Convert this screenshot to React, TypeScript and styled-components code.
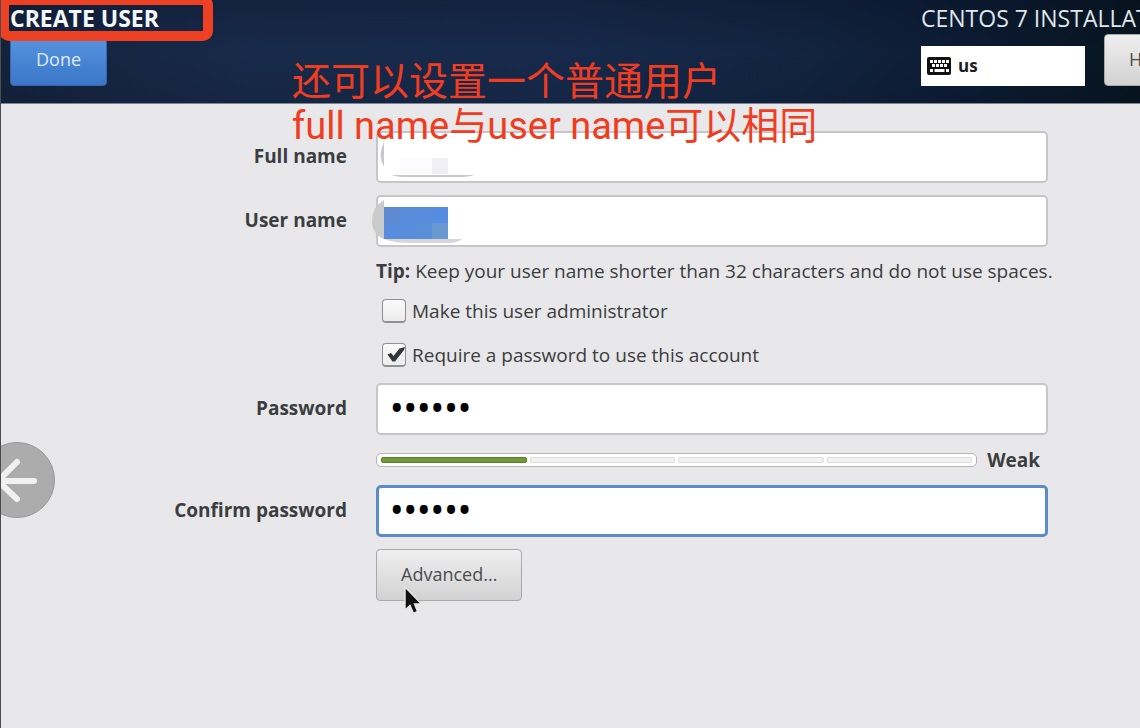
import React, { useState } from "react";
import styled, { createGlobalStyle, css } from "styled-components";

const GlobalStyle = createGlobalStyle`
  *, *::before, *::after { box-sizing: border-box; }
  html, body { margin: 0; background: #e8e8ea; }
  body, button, input { font-family: "Open Sans", "Noto Sans", sans-serif; }
`;

const Page = styled.div`
  position: relative;
  min-height: 100vh;
  overflow: hidden;
  border-left: 1px solid #4c4c50;
  background: #e8e8ea;
  color: #3b3d3f;
  font-size: 19px;
  line-height: 24px;
`;

const Header = styled.header`
  display: flex;
  justify-content: space-between;
  height: 104px;
  padding-left: 9px;
  border-bottom: 1px solid #7c8592;
  background:
    linear-gradient(180deg, rgba(4, 12, 28, 0.25), rgba(4, 12, 28, 0) 50%, rgba(4, 12, 28, 0.12)),
    linear-gradient(90deg, #14223d 0%, #182a4a 22%, #17294b 50%, #122440 70%, #0c1c33 84%, #07151f 100%);
`;

const HeaderSide = styled.div<{ $width?: number }>`
  display: flex;
  flex-direction: column;
  flex: none;
  width: ${(p) => (p.$width ? `${p.$width}px` : "auto")};
  padding-top: 4px;
  overflow: hidden;
`;

const Title = styled.h1<{ $light?: boolean }>`
  margin: 0;
  color: ${(p) => (p.$light ? "#dfe6ec" : "#f4f7fb")};
  font-size: 23px;
  font-weight: ${(p) => (p.$light ? 400 : 700)};
  line-height: 29px;
  white-space: nowrap;
`;

const HeaderTools = styled.div`
  display: flex;
  align-items: flex-end;
  gap: 19px;
  margin-top: 1px;
`;

const Button = styled.button<{ $primary?: boolean }>`
  flex: none;
  height: 52px;
  padding: 0 24px 2px;
  border: 1px solid #a9a9a9;
  border-radius: 4px;
  background: linear-gradient(#efefef, #d2d2d2);
  color: #4a4c4e;
  font-size: 18px;
  line-height: 24px;
  ${(p) =>
    p.$primary &&
    css`
      padding: 0 25px 2px;
      border-color: #3465ad;
      background: linear-gradient(#5795e0, #3b76c8);
      color: #dfeafa;
    `}
`;

const KeyboardLayout = styled.div`
  display: flex;
  align-items: center;
  gap: 7px;
  flex: none;
  width: 164px;
  height: 40px;
  padding-left: 6px;
  background: #fff;
  color: #1c1c1c;
  font-size: 17px;
  font-weight: 700;
`;

const Form = styled.form`
  display: grid;
  grid-template-columns: 346px minmax(0, 1fr);
  column-gap: 29px;
  row-gap: 12px;
  align-items: center;
  padding: 27px 92px 0 0;
`;

const Label = styled.label`
  grid-column: 1;
  padding-bottom: 2px;
  text-align: right;
  font-weight: 700;
`;

const Field = styled.div`
  position: relative;
  grid-column: 2;
  display: flex;
`;

const TextBox = styled.input<{ $active?: boolean }>`
  width: 100%;
  height: 52px;
  padding: 0 12px;
  border: ${(p) => (p.$active ? "3px solid #5c8bc8" : "2px solid #c6c6c8")};
  border-radius: 5px;
  background: #fff;
  color: #000;
  font-size: 19px;
  outline: none;
  &[type="password"] {
    padding: 0 ${(p) => (p.$active ? 11 : 12)}px 4px;
    font-family: "Noto Sans", sans-serif;
    font-size: 36px;
  }
`;

const Mosaic = styled.svg`
  position: absolute;
  left: -5px;
  top: 0;
  pointer-events: none;
`;

const Tip = styled.p`
  grid-column: 2;
  margin: 0;
  white-space: nowrap;
`;

const CheckRow = styled.label`
  grid-column: 2;
  display: flex;
  align-items: center;
  gap: 6px;
  height: 32px;
  padding-left: 6px;
`;

const CheckBox = styled.span`
  position: relative;
  display: flex;
  width: 24px;
  height: 24px;
  input {
    appearance: none;
    width: 24px;
    height: 24px;
    margin: 0;
    border: 1px solid #8f9092;
    border-bottom-width: 2px;
    border-radius: 4px;
    background: linear-gradient(#fafafa, #ececec);
  }
  svg {
    position: absolute;
    left: 0;
    top: 0;
    visibility: hidden;
    pointer-events: none;
  }
  input:checked + svg { visibility: visible; }
`;

const Strength = styled.div`
  grid-column: 2;
  display: flex;
  align-items: center;
  gap: 10px;
  height: 26px;
  padding-right: 8px;
  font-weight: 700;
`;

const Meter = styled.div`
  display: flex;
  flex: 1;
  gap: 3px;
  height: 14px;
  padding: 3px 4px;
  border: 1px solid #b4b4b6;
  border-radius: 5px;
  background: #fff;
`;

const Segment = styled.span<{ $filled: boolean }>`
  flex: 1;
  border: 1px solid ${(p) => (p.$filled ? "#5c7f2c" : "#dcdcdc")};
  border-radius: 2px;
  background: ${(p) => (p.$filled ? "#739a3a" : "#f2f2f2")};
`;

const Actions = styled.div`
  grid-column: 2;
  display: flex;
`;

const Highlight = styled.div`
  position: absolute;
  left: -2px;
  top: -5px;
  width: 214px;
  height: 46px;
  border: 10px solid #ee4023;
  border-radius: 10px;
  pointer-events: none;
`;

const Note = styled.div`
  position: absolute;
  left: 291px;
  top: 60px;
  color: #f03c20;
  font-family: Roboto, "Noto Sans CJK SC", sans-serif;
  line-height: 44px;
  white-space: nowrap;
  pointer-events: none;
`;

const NoteLine = styled.p<{ $size: number }>`
  margin: 0;
  font-size: ${(p) => p.$size}px;
`;

const BackButton = styled.button`
  position: absolute;
  left: -22px;
  top: 442px;
  width: 76px;
  height: 76px;
  padding: 0;
  border: 1px solid #979797;
  border-radius: 50%;
  background: #acacac;
  svg { display: block; }
`;

const Pointer = styled.svg`
  position: absolute;
  left: 402px;
  top: 586px;
  pointer-events: none;
`;

function KeyboardIcon() {
  const keys = [
    [3, 3], [7, 3], [11, 3], [15, 3], [19, 3],
    [5, 7], [9, 7], [13, 7], [17, 7],
    [3, 12], [19, 12],
  ];
  return (
    <svg width="24" height="18" viewBox="0 0 24 18" aria-hidden="true">
      <rect width="24" height="18" rx="2" fill="#111" />
      {keys.map(([x, y]) => (
        <rect key={`${x}-${y}`} x={x} y={y} width="3" height="3" fill="#fff" />
      ))}
      <rect x="7.5" y="12" width="10" height="3" fill="#fff" />
    </svg>
  );
}

function Check({ label, initial }: { label: string; initial: boolean }) {
  const [on, setOn] = useState(initial);
  return (
    <CheckRow>
      <CheckBox>
        <input type="checkbox" checked={on} onChange={() => setOn(!on)} />
        <svg width="24" height="24" viewBox="0 0 24 24" aria-hidden="true">
          <path d="M5.5 11.5 L9 10 L11.5 13 L17.5 5.5 L23 4 L22 7 L13 18.5 L10.5 18.5 Z" fill="#333537" />
        </svg>
      </CheckBox>
      {label}
    </CheckRow>
  );
}

export default function App() {
  const [password, setPassword] = useState("secret");
  const [confirm, setConfirm] = useState("secret");

  return (
    <Page>
      <GlobalStyle />
      <Header>
        <HeaderSide>
          <Title>CREATE USER</Title>
          <HeaderTools>
            <Button type="button" $primary>Done</Button>
          </HeaderTools>
        </HeaderSide>
        <HeaderSide $width={219}>
          <Title as="h2" $light>CENTOS 7 INSTALLATION</Title>
          <HeaderTools>
            <KeyboardLayout>
              <KeyboardIcon />
              us
            </KeyboardLayout>
            <Button type="button">Help!</Button>
          </HeaderTools>
        </HeaderSide>
      </Header>

      <Form onSubmit={(e) => e.preventDefault()}>
        <Label htmlFor="full-name">Full name</Label>
        <Field>
          <TextBox id="full-name" type="text" />
          <Mosaic width="110" height="52" viewBox="0 0 110 52" aria-hidden="true">
            <path d="M13 11 Q6 24 13 36 Z" fill="#c9c9cb" />
            <path d="M21 44 H103 Q98 46 88 46 H34 Q26 46 21 44 Z" fill="#c9c9cb" />
            <rect x="29" y="27" width="32" height="16" fill="#fcfcfe" />
            <rect x="61" y="27" width="16" height="16" fill="#efeff5" />
          </Mosaic>
        </Field>

        <Label htmlFor="user-name">User name</Label>
        <Field>
          <TextBox id="user-name" type="text" />
          <Mosaic width="110" height="52" viewBox="0 0 110 52" aria-hidden="true">
            <path d="M13 5 Q1 12 1 26 Q1 39 13 44 Z" fill="#cbcbcb" />
            <path d="M13 44 H91 Q87 48 76 48 H40 Q22 48 13 44 Z" fill="#d6d6d8" />
            <rect x="13" y="12" width="64" height="32" fill="#588cdc" />
            <rect x="13" y="12" width="16" height="17" fill="#5d8ad2" />
            <rect x="61" y="12" width="16" height="17" fill="#568be2" />
            <rect x="45" y="28" width="16" height="16" fill="#588fd8" />
            <rect x="61" y="28" width="16" height="16" fill="#6798d0" />
          </Mosaic>
        </Field>

        <Tip><b>Tip:</b> Keep your user name shorter than 32 characters and do not use spaces.</Tip>
        <Check label="Make this user administrator" initial={false} />
        <Check label="Require a password to use this account" initial />

        <Label htmlFor="password">Password</Label>
        <Field>
          <TextBox id="password" type="password" value={password} onChange={(e) => setPassword(e.target.value)} />
        </Field>

        <Strength>
          <Meter>
            {[0, 1, 2, 3].map((i) => <Segment key={i} $filled={i === 0} />)}
          </Meter>
          Weak
        </Strength>

        <Label htmlFor="confirm">Confirm password</Label>
        <Field>
          <TextBox id="confirm" type="password" $active value={confirm} onChange={(e) => setConfirm(e.target.value)} />
        </Field>

        <Actions>
          <Button type="button">Advanced...</Button>
        </Actions>
      </Form>

      <Highlight />
      <Note>
        <NoteLine $size={39}>还可以设置一个普通用户</NoteLine>
        <NoteLine $size={38}>full name与user name可以相同</NoteLine>
      </Note>
      <BackButton type="button" aria-label="Back">
        <svg width="74" height="74" viewBox="1 1 74 74" fill="none" stroke="#f1f1f1" strokeWidth="6" strokeLinecap="round" strokeLinejoin="round" aria-hidden="true">
          <path d="M38 20 L19 39 L38 57 M20 39 H55" />
        </svg>
      </BackButton>
      <Pointer width="22" height="30" viewBox="0 0 22 30" aria-hidden="true">
        <path d="M2 1 V24 L7 19.5 L10.5 27.5 L14.5 25.5 L11.5 18 H18.5 Z" fill="#111" stroke="#e9e9e9" strokeWidth="1.4" />
      </Pointer>
    </Page>
  );
}
